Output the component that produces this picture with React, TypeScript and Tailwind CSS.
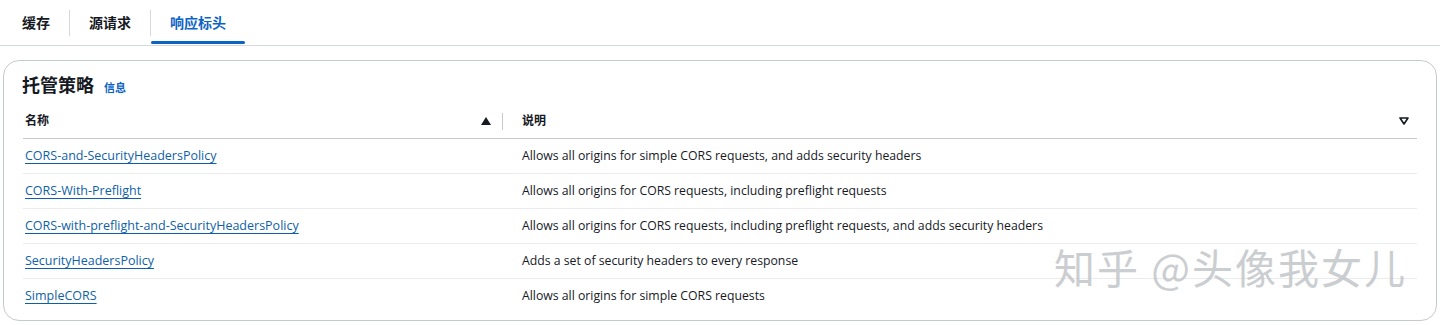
import { ReactNode } from 'react'

const TABS = ['缓存', '源请求', '响应标头']
const ACTIVE_TAB = '响应标头'

const POLICIES = [
  { name: 'CORS-and-SecurityHeadersPolicy', description: 'Allows all origins for simple CORS requests, and adds security headers' },
  { name: 'CORS-With-Preflight', description: 'Allows all origins for CORS requests, including preflight requests' },
  { name: 'CORS-with-preflight-and-SecurityHeadersPolicy', description: 'Allows all origins for CORS requests, including preflight requests, and adds security headers' },
  { name: 'SecurityHeadersPolicy', description: 'Adds a set of security headers to every response' },
  { name: 'SimpleCORS', description: 'Allows all origins for simple CORS requests' },
]

const FONT = "font-['Open_Sans','Noto_Sans_CJK_SC',sans-serif]"

function Cell({ children, className = '' }: { children: ReactNode; className?: string }) {
  return <div className={`flex h-[34px] items-center ${className}`}>{children}</div>
}

export default function App() {
  return (
    <div className={`relative h-[325px] w-[1440px] overflow-hidden bg-white text-[#16191f] ${FONT}`}>
      <div className="flex h-[46px] items-stretch border-b border-[#d5d8dc] pl-[3px]">
        {TABS.map((tab, i) => (
          <div key={tab} className="flex items-center">
            {i > 0 && <div className="h-[26px] w-px bg-[#d5d8dc]" />}
            <div
              className={`relative flex h-full items-center px-[19px] text-[14px] font-bold ${
                tab === ACTIVE_TAB ? 'text-[#0c63c6]' : 'text-[#16191f]'
              }`}
            >
              {tab}
              {tab === ACTIVE_TAB && (
                <span className="absolute bottom-[1px] left-0 right-0 h-[3px] rounded-full bg-[#0c63c6]" />
              )}
            </div>
          </div>
        ))}
      </div>

      <div className="mx-[3px] mt-[14px] rounded-[16px] border border-[#c6c9ce] px-[19px] pb-[7px] pt-[11px]">
        <div className="flex items-baseline gap-[10px]">
          <h2 className="-ml-[1px] text-[18px] font-bold">托管策略</h2>
          <a className="text-[11px] font-bold text-[#0c63c6]">信息</a>
        </div>

        <div className="mt-[5px] grid grid-cols-[480px_1fr] border-b border-[#c6c9ce] text-[12px] font-bold">
          <Cell className="justify-between pl-[2px]">
            <span>名称</span>
            <div className="flex items-center gap-[11px]">
              <svg width="10" height="8" viewBox="0 0 10 8">
                <path d="M5 0 L10 8 L0 8 Z" fill="#16191f" />
              </svg>
              <div className="h-[17px] w-px bg-[#c6c9ce]" />
            </div>
          </Cell>
          <Cell className="justify-between pl-[19px] pr-[8px]">
            <span>说明</span>
            <svg width="10" height="8" viewBox="0 0 10 8">
              <path d="M1 1 L9 1 L5 7 Z" fill="none" stroke="#16191f" strokeWidth="1.6" strokeLinejoin="round" />
            </svg>
          </Cell>
        </div>

        {POLICIES.map((p, i) => (
          <div
            key={p.name}
            className={`grid grid-cols-[480px_1fr] text-[12.25px] ${
              i < POLICIES.length - 1 ? 'border-b border-[#e9ebed]' : ''
            }`}
          >
            <Cell className="pl-[2px]">
              <a className="text-[12.5px] text-[#0f5fa8] underline decoration-[#0f5fa8] underline-offset-[3px]">{p.name}</a>
            </Cell>
            <Cell className="pl-[19px]">{p.description}</Cell>
          </div>
        ))}
      </div>

      <div className="pointer-events-none absolute left-[1054px] top-[236px] text-[41px] tracking-[2px] text-[#bfc2c6] opacity-80 font-['Noto_Sans_CJK_SC',sans-serif]">
        知乎 @头像我女儿
      </div>
    </div>
  )
}
